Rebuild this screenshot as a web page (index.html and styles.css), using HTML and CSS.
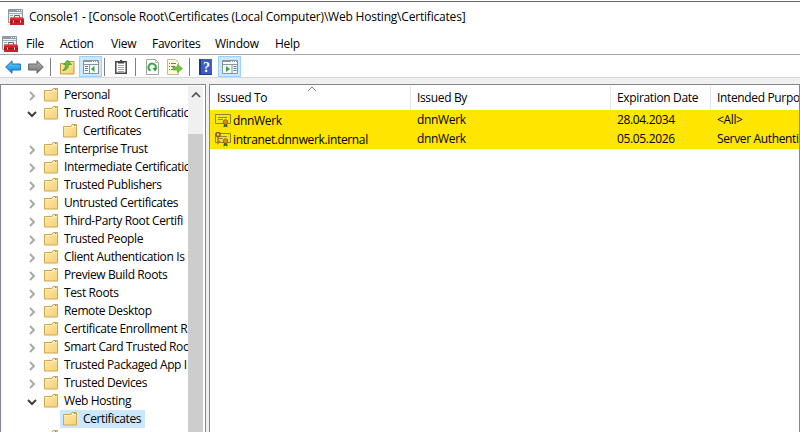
FILE: index.html
```html
<!DOCTYPE html>
<html lang="en">
<head>
<meta charset="utf-8">
<title>Console1</title>
<link rel="stylesheet" href="styles.css">
</head>
<body>
<svg class="defs" width="0" height="0">
  <defs>
    <linearGradient id="gold" x1="0" y1="0" x2="1" y2="1"><stop offset="0" stop-color="#ffebad"/><stop offset="1" stop-color="#f5cf73"/></linearGradient>
    <linearGradient id="blue" x1="0" y1="0" x2="0" y2="1"><stop offset="0" stop-color="#6fd0ff"/><stop offset="1" stop-color="#0b83d4"/></linearGradient>
    <linearGradient id="grey" x1="0" y1="0" x2="0" y2="1"><stop offset="0" stop-color="#b5b5b5"/><stop offset="1" stop-color="#707070"/></linearGradient>
    <symbol id="folder" viewBox="0 0 14 14"><path d="M.5 2.500h7.500l1-2h4.500v12.500H.5z" fill="url(#gold)" stroke="#d0a650"/><path d="M9 2h4" stroke="#fff"/><path d="M11 1.500h1.500" stroke="#4e93d0"/><path d="M1 3.500h8l1-1h3" fill="none" stroke="#fff0bd"/></symbol>
    <symbol id="right" viewBox="0 0 8 10"><path d="M2 1l4 4-4 4" fill="none" stroke="#a6a6a6" stroke-width="1.800"/></symbol>
    <symbol id="down" viewBox="0 0 10 8"><path d="M1 2l4 4 4-4" fill="none" stroke="#404040" stroke-width="2"/></symbol>
    <symbol id="mmc" viewBox="0 0 16 16"><path d="M.5.500h14v13H.5z" fill="#edf1f4" stroke="#8c98a3"/><path d="M1 2h13" stroke="#8e9baa" stroke-width="2"/><path d="M9 1.500h1M11 1.500h1M13 1.500h1" stroke="#fff"/><path d="M1 4.500h13" stroke="#a2adb7"/><path d="M2 6.500h3M2 8.500h2" stroke="#9ba7b2"/><path d="M6.500 9V6.500h5V9" fill="none" stroke="#5c6870"/><path d="M3 8.500h12l1 1V16H2V9.500z" fill="#d01f22"/><path d="M3 9h12" stroke="#ec5550"/><path d="M2 12.500h14" stroke="#a01216"/><path d="M5.500 11.500v2M12.500 11.500v2" stroke="#eee"/></symbol>
    <symbol id="cert" viewBox="0 0 17 15"><path d="M.5 1.500h15v9H.5z" fill="#f2e626" stroke="#8b852d"/><path d="M3 4.500h9M3 6.500h5" stroke="#8c8a38"/><path d="M9 10l-.5 4.500 2-1 2 1-.5-4.500z" fill="#305c36"/><circle cx="10.500" cy="9" r="2.300" fill="#d88d15" stroke="#a7670e"/></symbol>
  </defs>
</svg>
<div class="window">
  <header class="titlebar"><svg width="16" height="16"><use href="#mmc"/></svg><h1>Console1 - [Console Root\Certificates (Local Computer)\Web Hosting\Certificates]</h1></header>
  <nav class="menu"><svg width="16" height="16"><use href="#mmc"/></svg><span class="file">File</span><span class="action">Action</span><span class="view">View</span><span class="fav">Favorites</span><span class="win">Window</span><span>Help</span></nav>
  <div class="toolbar">
    <svg class="back" width="16" height="14" viewBox="0 0 16 14"><path d="M.7 7L7 .8V4h8.400v6H7v3.200z" fill="url(#blue)" stroke="#1873b5"/></svg>
    <svg class="forward" width="16" height="14" viewBox="0 0 16 14"><path d="M15.300 7L9 .8V4H.6v6H9v3.200z" fill="url(#grey)" stroke="#646464"/></svg>
    <i class="sep"></i>
    <svg class="up" width="15" height="16" viewBox="0 0 15 16"><path d="M.5 4.500H7l1-2h6v12.500H.5z" fill="url(#gold)" stroke="#c79b45"/><path d="M2.500 11.500C5 10 5.500 8 5.500 5.500H3.500L7.500 1l4 4.500H8.500c0 3.500-2 6-6 6z" fill="#65c32e" stroke="#338324" stroke-width=".6"/></svg>
    <span class="toggle"><svg width="16" height="14" viewBox="0 0 16 14"><path d="M.5.500h15v13H.5z" fill="#f8f8f8" stroke="#88939b"/><path d="M1 1.500h14M1 4.500h14M6.500 5v8" stroke="#8b969f"/><path d="M9 1.500h1M11 1.500h1M13 1.500h1" stroke="#fff"/><path d="M2 6.500h3M2 8.500h3M2 10.500h3" stroke="#4e86b8"/><path d="M11.500 6v6L8 9z" fill="#35a43a"/></svg></span>
    <i class="sep second"></i>
    <svg class="clip" width="12" height="14" viewBox="0 0 12 14"><path d="M.8 1.800h10.400v11.400H.8z" fill="#fff" stroke="#454545" stroke-width="1.500"/><path d="M3 2.500h6M6 0v2" stroke="#454545" stroke-width="2"/><path d="M3 5.500h6M3 7.500h6M3 9.500h6M3 11.500h6" stroke="#888" stroke-width=".8"/></svg>
    <i class="sep third"></i>
    <svg class="refresh" width="13" height="16" viewBox="0 0 13 16"><path d="M.5.500h9l3 3v12H.5z" fill="#fff" stroke="#a2a2a2"/><path d="M9.500.500v3h3" fill="none" stroke="#bbb"/><path d="M4.500 11.500A3.600 3.600 0 1 1 9.500 9.500" fill="none" stroke="#35a743" stroke-width="2"/><path d="M6.500 9h5L9 12.500z" fill="#299b39"/></svg>
    <svg class="export" width="16" height="16" viewBox="0 0 16 16"><path d="M.5.500h8l3 3v12H.5z" fill="#fff8d9" stroke="#c4b898"/><path d="M2 4.500h1M2 7.500h1M2 10.500h1M4 4.500h5M4 7.500h4M4 10.500h4" stroke="#777"/><path d="M6 8h4.500V5.500L15.500 9.500 10.500 13.500V11H6z" fill="#6bc73a" stroke="#42a62b" stroke-width=".6"/></svg>
    <i class="sep fourth"></i>
    <svg class="help" width="13" height="16" viewBox="0 0 13 16"><path d="M0 0h13v16H0z" fill="#3d5dc6"/><path d="M0 0h2v16H0zM0 15h13v1H0z" fill="#203787"/><text x="4" y="13" class="question">?</text></svg>
    <span class="toggle last"><svg width="16" height="14" viewBox="0 0 16 14"><path d="M.5.500h15v13H.5z" fill="#f8f8f8" stroke="#88939b"/><path d="M1 1.500h14M1 4.500h14M10 5v8" stroke="#8b969f"/><path d="M9 1.500h1M11 1.500h1M13 1.500h1" stroke="#fff"/><path d="M11.500 6.500h3M11.500 8.500h3M11.500 10.500h3" stroke="#4e86b8"/><path d="M4 6v6l4-3z" fill="#35a43a"/></svg></span>
  </div>
  <main class="panes">
    <section class="tree-pane">
      <div class="tree" id="tree"></div>
      <div class="scroll"><svg width="10" height="8" viewBox="0 0 10 8"><path d="M1 6l4-4 4 4" fill="none" stroke="#505050" stroke-width="1.700"/></svg><div class="thumb"></div></div>
    </section>
    <section class="list">
      <div class="columns heads"><span>Issued To<svg class="sort" width="10" height="6" viewBox="0 0 10 6"><path d="M1 5l4-4 4 4" fill="none" stroke="#777"/></svg></span><span>Issued By</span><span>Expiration Date</span><span>Intended Purpo</span></div>
      <div class="columns record"><span class="subject"><svg width="17" height="15"><use href="#cert"/></svg><b>dnnWerk</b></span><span>dnnWerk</span><span>28.04.2034</span><span>&lt;All&gt;</span></div>
      <div class="columns record second-record"><span class="subject"><svg width="17" height="15" viewBox="0 0 17 15"><use href="#cert"/><path d="M3 4v7l2-2" fill="none" stroke="#a87721" stroke-width="1.500"/><circle cx="3" cy="2.500" r="2" fill="#ffe600" stroke="#8c551c" stroke-width="1.500"/></svg><b>intranet.dnnwerk.internal</b></span><span>dnnWerk</span><span>05.05.2026</span><span>Server Authenti</span></div>
    </section>
  </main>
</div>
<script src="tree.js"></script>
</body>
</html>
```
FILE: styles.css
```css
*{box-sizing:border-box}
body{margin:0;overflow:hidden;background:#fff;color:#000;font:12px/18px "Open Sans","Noto Sans",sans-serif;letter-spacing:-.25px}
.defs{position:absolute}
svg{display:block;flex:none}
.window{height:432px;display:flex;flex-direction:column;background:#f0f0f0;overflow:hidden}
.titlebar{height:33px;display:flex;align-items:center;gap:5px;padding-left:8px;border-top:1px solid #fff;box-shadow:inset 0 1px #666;background:#fff}
h1{font-size:12px;font-weight:400;margin:0;white-space:nowrap;letter-spacing:-.2px}
.menu{height:21px;display:flex;align-items:center;background:#fff;padding-left:2px}
.file{margin-left:8px;width:34px}.action{width:51px}.view{width:41px}.fav{width:63px}.win{width:60px}
.toolbar{height:24px;display:flex;align-items:center;background:#fff;border-top:1px solid #a8a8a8;border-bottom:1px solid #d7d7d7;padding:1px 0 0 5px;flex:none}
.forward{margin-left:7px}
.sep{width:1px;height:18px;background:#808080;margin-left:6px}
.up{margin-left:9px}
.toggle{width:23px;height:21px;display:grid;place-items:center;background:#cce8ff;border:1px solid #99d1ff;margin-left:4px}
.second{margin-left:2px}.clip{margin-left:10px}.third{margin-left:8px}.refresh{margin-left:10px}.export{margin-left:8px}.fourth{margin-left:6px}.help{margin-left:9px}.last{margin-left:6px}
.question{font:bold 14px "Liberation Serif",serif;fill:#fff}
.panes{display:grid;grid-template-columns:206px 1fr;gap:3px;padding-top:6px;flex:1;min-height:0}
.tree-pane{background:#fff;border:1px solid #828790;border-bottom:0;display:flex;padding:1px 1px 0 0;overflow:hidden}
.tree{width:187px;overflow:hidden;flex:none;letter-spacing:-.38px}
.node{height:18px;display:flex;align-items:center;white-space:nowrap;padding-left:26px}
.toggle-arrow{width:17px;display:flex;flex:none;padding-left:1px;padding-top:2px}
.toggle-arrow.down{padding-left:0}
.node .label{padding-left:6px;padding-right:4px}
.child{padding-left:59px}
.item{display:flex;align-items:center;padding-left:3px;height:18px;flex:none}
.toggle-arrow + .item{padding-left:0}
.selected{background:#cce8ff}
.scroll{width:15px;background:#f0f0f0;display:flex;flex-direction:column;align-items:center;padding-top:5px}
.thumb{width:15px;flex:1;margin-top:35px;background:#cdcdcd}
.list{background:#fff;border:1px solid #828790;border-bottom:0;overflow:hidden;letter-spacing:-.35px}
.columns{display:grid;grid-template-columns:201px 200px 100px 88px}
.columns>span{padding-left:6px;white-space:nowrap;overflow:hidden}
.heads{height:25px;line-height:24px;padding-top:1px}
.heads>span{position:relative;border-right:1px solid #e5e5e5}
.columns.heads>span:first-child{padding-left:7px}
.heads>span:last-child{border-right:0}
.sort{position:absolute;left:97px;top:0}
.record{height:20px;line-height:19px;background:#ffe600}
.second-record{height:19px;line-height:18px}
.columns>.subject{display:flex;align-items:center;gap:1px;padding-left:5px}
.subject b{font-weight:400}
```
FILE: tree.js
```js
const entries = [
  ["Personal", "right"], ["Trusted Root Certificatic", "down"], ["Certificates", "child"],
  ["Enterprise Trust", "right"], ["Intermediate Certificatic", "right"],
  ["Trusted Publishers", "right"], ["Untrusted Certificates", "right"],
  ["Third-Party Root Certifi", "right"], ["Trusted People", "right"],
  ["Client Authentication Is", "right"], ["Preview Build Roots", "right"],
  ["Test Roots", "right"], ["Remote Desktop", "right"], ["Certificate Enrollment R", "right"],
  ["Smart Card Trusted Roo", "right"], ["Trusted Packaged App I", "right"],
  ["Trusted Devices", "right"], ["Web Hosting", "down"], ["Certificates", "selected"], ["", ""]
];
document.getElementById("tree").innerHTML = entries.map(([label, kind]) => {
  const child = kind === "child" || kind === "selected";
  const width = kind === "down" ? 10 : 8;
  const height = kind === "down" ? 8 : 10;
  const arrow = child ? "" : `<span class="toggle-arrow ${kind}"><svg width="${width}" height="${height}"><use href="#${kind}"/></svg></span>`;
  return `<div class="node ${child ? "child" : ""}">${arrow}<span class="item ${kind === "selected" ? "selected" : ""}"><svg width="14" height="14"><use href="#folder"/></svg><span class="label">${label}</span></span></div>`;
}).join("");
```
